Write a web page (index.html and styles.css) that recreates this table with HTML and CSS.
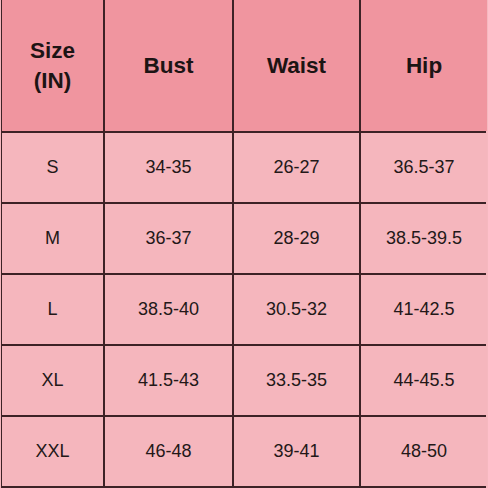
FILE: index.html
```html
<!DOCTYPE html>
<html>
<head>
<meta charset="utf-8">
<link rel="stylesheet" href="styles.css">
</head>
<body>
<div class="chart">
  <div class="cell head">Size<br>(IN)</div>
  <div class="cell head">Bust</div>
  <div class="cell head">Waist</div>
  <div class="cell head">Hip</div>

  <div class="cell">S</div><div class="cell">34-35</div><div class="cell">26-27</div><div class="cell">36.5-37</div>
  <div class="cell">M</div><div class="cell">36-37</div><div class="cell">28-29</div><div class="cell">38.5-39.5</div>
  <div class="cell">L</div><div class="cell">38.5-40</div><div class="cell">30.5-32</div><div class="cell">41-42.5</div>
  <div class="cell">XL</div><div class="cell">41.5-43</div><div class="cell">33.5-35</div><div class="cell">44-45.5</div>
  <div class="cell">XXL</div><div class="cell">46-48</div><div class="cell">39-41</div><div class="cell">48-50</div>
</div>
</body>
</html>
```
FILE: styles.css
```css
html, body {
  margin: 0;
  padding: 0;
  background: #f5b8bf;
}
.chart {
  display: grid;
  grid-template-columns: 101px 127px 125px 126px;
  grid-template-rows: 131px repeat(5, 69px);
  gap: 2px;
  margin-left: 1px;
  padding: 0 1px 2px 1px;
  width: 485px;
  box-sizing: border-box;
  background: #3d2226;
  font-family: "Liberation Sans", Arial, sans-serif;
}
.cell {
  display: flex;
  align-items: center;
  justify-content: center;
  text-align: center;
  background: #f5b6bd;
  color: #231818;
  font-size: 18px;
}
.head {
  background: #f0959f;
  color: #1c1414;
  font-weight: bold;
  font-size: 22.5px;
  line-height: 30px;
}
```
